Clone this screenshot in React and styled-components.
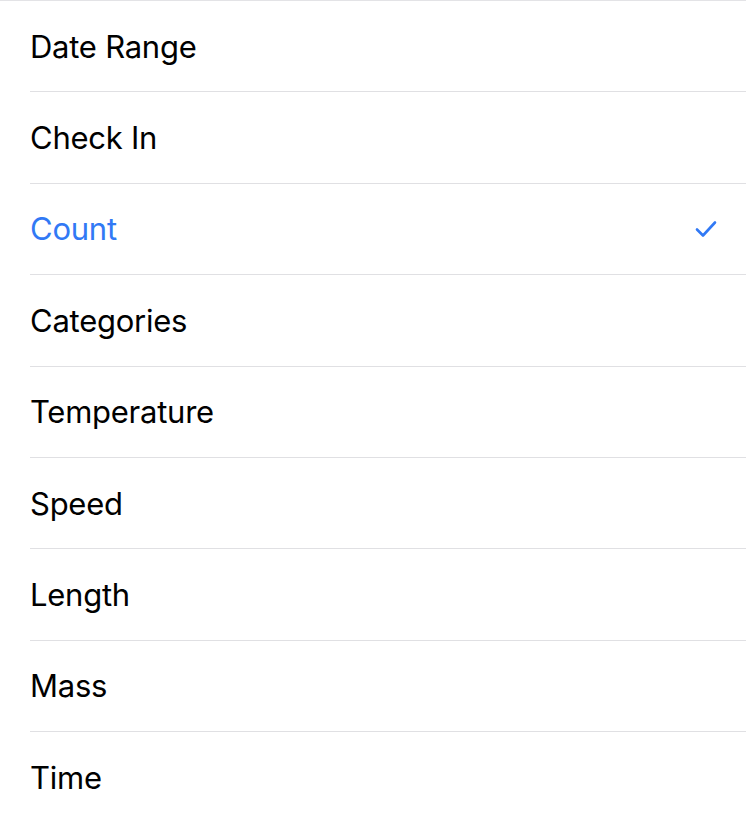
import React from "react";
import styled, { createGlobalStyle } from "styled-components";

const GlobalStyle = createGlobalStyle`
  body {
    margin: 0;
    background: #ffffff;
    font-family: Inter, "Noto Sans", sans-serif;
  }
`;

const List = styled.ul`
  list-style: none;
  margin: 0;
  padding: 0;
  border-top: 1px solid #e3e3e6;
`;

const Row = styled.li`
  padding-left: 30px;
`;

const RowInner = styled.div`
  height: 90.4px;
  display: flex;
  align-items: center;
  justify-content: space-between;
  padding-right: 29px;
  border-bottom: ${(p) => (p.last ? "none" : "1px solid #e0e0e3")};
`;

const Label = styled.span`
  font-size: 31px;
  letter-spacing: -0.25px;
  color: ${(p) => (p.selected ? "#3179f5" : "#000000")};
`;

const Check = () => (
  <svg width="22" height="18" viewBox="0 0 22 18" fill="none">
    <path
      d="M2 9.5 L8 15.5 L20 2.5"
      stroke="#3179f5"
      strokeWidth="2.6"
      strokeLinecap="round"
      strokeLinejoin="round"
    />
  </svg>
);

const items = [
  "Date Range",
  "Check In",
  "Count",
  "Categories",
  "Temperature",
  "Speed",
  "Length",
  "Mass",
  "Time",
];

const selected = "Count";

export default function App() {
  return (
    <>
      <GlobalStyle />
      <List>
        {items.map((item, i) => (
          <Row key={item}>
            <RowInner last={i === items.length - 1}>
              <Label selected={item === selected}>{item}</Label>
              {item === selected && <Check />}
            </RowInner>
          </Row>
        ))}
      </List>
    </>
  );
}
